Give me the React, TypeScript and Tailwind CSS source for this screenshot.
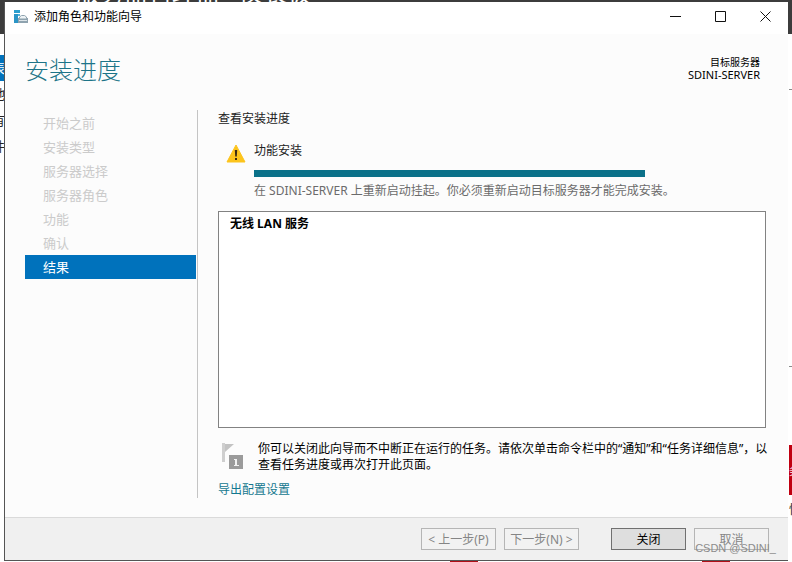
import type { ReactNode } from "react";

const steps = [
    "开始之前",
    "安装类型",
    "服务器选择",
    "服务器角色",
    "功能",
    "确认",
    "结果",
];

const ServerIcon = () => (
    <svg width="15" height="15" viewBox="0 0 15 15" aria-hidden="true">
        <path d="M1 1h6v3H1z" fill="#2b9fce" />
        <path d="M1 5h4v9H1z" fill="#2b95c6" />
        <path d="M5 5h2v2H5z" fill="#4fb0d8" />
        <path d="M5 9h10v5H5z" fill="#8fa3af" />
        <path d="M6.5 9.5V8l2-1.5h3l2 1.500v1.500" fill="#eef3f5" stroke="#8fa3af" />
        <path d="M6 11.5h8" stroke="#dde5e9" />
    </svg>
);

const WarningIcon = () => (
    <svg width="20" height="19" viewBox="0 0 20 19" aria-hidden="true">
        <path d="M10 1L19 18H1z" fill="#fcc41c" stroke="#fcc41c" strokeLinejoin="round" />
        <path d="M8.8 6h2.4l-.4 6.5H9.2z" fill="#3a2a12" />
        <path d="M9 14h2v2H9z" fill="#3a2a12" />
    </svg>
);

const FlagIcon = () => (
    <svg width="22" height="26" viewBox="0 0 22 26" aria-hidden="true">
        <path d="M0 0h3v19H0z" fill="#cfcfcf" />
        <path d="M3 1h9L3 9z" fill="#c3c3c3" />
        <path d="M7 12h14v14H7z" fill="#9b9b9b" />
        <path d="M12 16h3v6h2v1h-5v-1h1v-5h-1z" fill="#f2f2f2" />
    </svg>
);

const CaptionButton = ({ label, children }: { label: string; children: ReactNode }) => (
    <button type="button" aria-label={label} className="flex h-8 w-[45px] items-center justify-center">
        <svg width="11" height="11" viewBox="0 0 11 11" fill="none" stroke="#111">
            {children}
        </svg>
    </button>
);

const FooterButton = ({ children, disabled }: { children: ReactNode; disabled?: boolean }) => (
    <button
        type="button"
        disabled={disabled}
        className="h-[22px] w-[75px] border border-[#707070] bg-[#dedede] pt-px whitespace-nowrap text-black disabled:border-[#b5b5b5] disabled:bg-[#f2f2f2] disabled:text-[#858585]"
    >
        {children}
    </button>
);

// parts of the server manager that stick out around the dialog
const Backdrop = () => (
    <div className="absolute inset-0 overflow-hidden bg-white" aria-hidden="true">
        <div className="h-[34px] bg-[#3c3c3c]" />
        <div className="absolute top-[-17px] left-[76px] text-2xl leading-5 whitespace-nowrap text-white">服务器管理器 · 仪表板</div>
        <div className="absolute top-[55px] left-0 h-[26px] w-1 bg-[#0072bc]" />
        <div className="absolute top-[62px] -left-2 text-[13px] leading-3 text-white">表</div>
        <div className="absolute top-[81px] -left-2 text-[13px] leading-[26px] text-[#222]">
            <div>地</div>
            <div>有</div>
            <div>件</div>
        </div>
        <div className="absolute top-[89px] right-0 h-[278px] w-[3px] border-y border-[#8a8a8a]" />
        <div className="absolute top-[445px] right-0 h-[50px] w-[3px] overflow-hidden bg-[#c00010] text-white">
            <div className="pt-5 text-[10px] leading-3">务</div>
        </div>
        <div className="absolute top-[502px] -right-2 w-[11px] text-xs leading-4 text-[#222]">性</div>
        <div className="absolute bottom-0 left-[450px] h-2 w-[28px] bg-[#b01018]" />
        <div className="absolute bottom-0 left-[702px] h-2 w-[28px] bg-[#b01018]" />
    </div>
);

const App = () => {
    return (
        <div className="relative flex min-h-screen overflow-hidden pt-0.5 pr-1 pb-px pl-1 font-['Noto_Sans','Noto_Sans_CJK_SC',sans-serif] text-xs leading-4 text-[#222]">
            <Backdrop />
            <div className="relative flex min-w-0 flex-1 flex-col border-b border-l border-[#555] bg-[#fcfcfc]">
                <header className="flex h-8 items-center bg-white pl-2 text-black">
                    <div className="-mt-1">
                        <ServerIcon />
                    </div>
                    <span className="-mt-0.5 ml-1.5">添加角色和功能向导</span>
                    <div className="-mt-1 ml-auto flex">
                        <CaptionButton label="最小化">
                            <path d="M0 5.5h11" />
                        </CaptionButton>
                        <CaptionButton label="最大化">
                            <path d="M.5 .5h10v10H.5z" />
                        </CaptionButton>
                        <CaptionButton label="关闭窗口">
                            <path d="M.5 .5l10 10M10.5 .5l-10 10" />
                        </CaptionButton>
                    </div>
                </header>

                <div className="flex h-[76px] items-start justify-between pt-5 pr-7 pl-5">
                    <h1 className="text-2xl font-light text-[#1d7488]">安装进度</h1>
                    <div className="pt-0.5 text-right text-black">
                        <p className="text-[10px] leading-3">目标服务器</p>
                        <p className="text-[11px] leading-[14px]">SDINI-SERVER</p>
                    </div>
                </div>

                <div className="mb-[19px] flex flex-1">
                    <nav className="w-[193px] shrink-0 border-r border-[#c4c4c4] pt-px pl-5">
                        <ol className="mr-px text-[13px] leading-6">
                            {steps.map((step, i) =>
                                i === steps.length - 1 ? (
                                    <li key={step} aria-current="step" className="bg-[#0072bc] pl-[18px] text-white">
                                        {step}
                                    </li>
                                ) : (
                                    <li key={step} className="pl-[18px] text-[#cbcbcb]">
                                        {step}
                                    </li>
                                )
                            )}
                        </ol>
                    </nav>

                    <main className="flex min-w-0 flex-1 flex-col pt-px pr-3 pl-5">
                        <p>查看安装进度</p>
                        <div className="mt-4 flex pl-2">
                            <div className="w-7 shrink-0 pt-px">
                                <WarningIcon />
                            </div>
                            <div>
                                <p>功能安装</p>
                                <div
                                    role="progressbar"
                                    aria-label="功能安装"
                                    aria-valuenow={100}
                                    className="mt-[11px] h-[7px] w-[391px] bg-[#0b7189]"
                                />
                                <p className="mt-1.5 text-[#6b6b6b]">
                                    在 SDINI-SERVER 上重新启动挂起。你必须重新启动目标服务器才能完成安装。
                                </p>
                            </div>
                        </div>
                        <div className="mt-3 mr-2.5 flex-1 border border-[#828282] bg-white px-[11px] py-1 font-bold text-black">
                            无线 LAN 服务
                        </div>
                        <div className="mt-[13px] flex text-black">
                            <div className="w-10 shrink-0 pt-0.5 pl-1">
                                <FlagIcon />
                            </div>
                            <p>
                                你可以关闭此向导而不中断正在运行的任务。请依次单击命令栏中的“通知”和“任务详细信息”，以查看任务进度或再次打开此页面。
                            </p>
                        </div>
                        <a href="#export" className="mt-[9px] self-start text-[#14788f]">
                            导出配置设置
                        </a>
                    </main>
                </div>

                <footer className="flex h-[43px] items-center justify-end gap-2 border-t border-[#dadada] bg-[#f0f0f0] pr-[19px]">
                    <FooterButton disabled>&lt; 上一步(P)</FooterButton>
                    <FooterButton disabled>下一步(N) &gt;</FooterButton>
                    <span className="w-4" />
                    <FooterButton>关闭</FooterButton>
                    <FooterButton disabled>取消</FooterButton>
                </footer>
            </div>
            <span className="absolute right-4 bottom-2 font-['Liberation_Sans',sans-serif] text-[11px] leading-3 text-[#8c8c8c]">
                CSDN @SDINI_
            </span>
        </div>
    );
};

export default App;
